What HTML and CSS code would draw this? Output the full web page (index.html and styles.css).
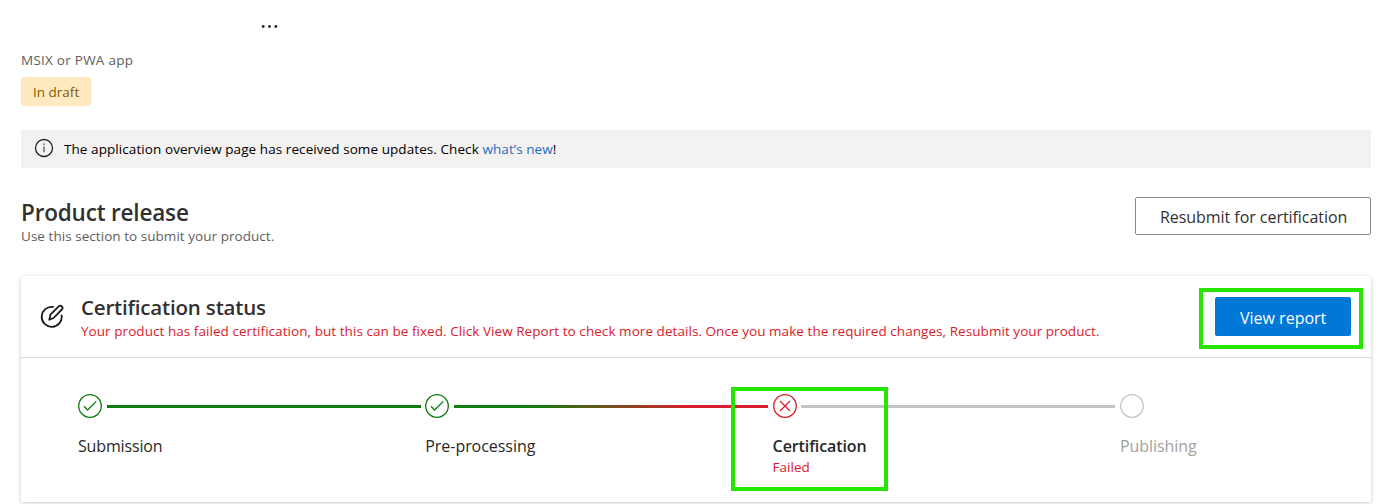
FILE: index.html
```html
<!DOCTYPE html>
<html lang="en">
<head>
<meta charset="utf-8">
<title>Product release</title>
<link rel="stylesheet" href="styles.css">
</head>
<body>
<main class="page">
  <header class="product">
    <svg class="more" viewBox="0 0 18 4"><circle cx="2.2" cy="2.5" r="1.4"/><circle cx="8.5" cy="2.5" r="1.4"/><circle cx="14.8" cy="2.5" r="1.4"/></svg>
    <div class="product-type">MSIX or PWA app</div>
    <div class="tag">In draft</div>
  </header>
  <div class="banner">
    <svg class="info" viewBox="0 0 20 20"><circle cx="10" cy="10" r="8.5" fill="none" stroke="#222" stroke-width="1.3"/><path d="M10 8.4v5.8" stroke="#555" stroke-width="1.3"/><circle cx="10" cy="6.1" r=".85" fill="#555"/></svg>
    <p class="banner-text">The application overview page has received some updates. Check <a class="link">what’s new</a>!</p>
  </div>
  <section class="release">
    <div>
      <h1 class="title">Product release</h1>
      <p class="subtitle">Use this section to submit your product.</p>
    </div>
    <button class="btn btn-outline">Resubmit for certification</button>
  </section>
  <section class="card">
    <div class="card-head">
      <svg class="edit" viewBox="0 0 24 24"><path d="M13.1 2.9A10 10 0 1 0 21.6 11.3M9.3 15.7l1.1-5 8.3-8.3a2.15 2.15 0 0 1 3.1 3.1l-8.2 8.5z" fill="none" stroke="#1b1b1b" stroke-width="1.8" stroke-linecap="round" stroke-linejoin="round"/></svg>
      <div class="status">
        <h2 class="status-title">Certification status</h2>
        <p class="status-text">Your product has failed certification, but this can be fixed. Click View Report to check more details. Once you make the required changes, Resubmit your product.</p>
      </div>
      <div class="report"><button class="btn btn-primary">View report</button></div>
    </div>
    <ol class="steps">
      <li class="step">
        <div class="track"><svg class="dot" viewBox="0 0 24 24"><circle cx="12" cy="12" r="11.3"/><path d="M6 12.3l3.6 3.7 8.7-8.6"/></svg><i class="line"></i></div>
        <div class="label submission">Submission</div>
      </li>
      <li class="step">
        <div class="track"><svg class="dot" viewBox="0 0 24 24"><circle cx="12" cy="12" r="11.3"/><path d="M6 12.3l3.6 3.7 8.7-8.6"/></svg><i class="line line-mixed"></i></div>
        <div class="label">Pre-processing</div>
      </li>
      <li class="step">
        <div class="track"><svg class="dot dot-failed" viewBox="0 0 24 24"><circle cx="12" cy="12" r="11.3"/><path d="M7 7l10 10M17 7L7 17"/></svg><i class="line line-idle"></i></div>
        <div class="label current">Certification</div>
        <div class="failed">Failed</div>
        <div class="callout"></div>
      </li>
      <li class="step step-last">
        <div class="track"><svg class="dot dot-idle" viewBox="0 0 24 24"><circle cx="12" cy="12" r="11.3"/></svg></div>
        <div class="label idle">Publishing</div>
      </li>
    </ol>
  </section>
</main>
</body>
</html>
```
FILE: styles.css
```css
* { box-sizing: border-box; }
body {
  margin: 0;
  background: #fff;
  color: #292827;
  font: 14px/20px "Open Sans", "Noto Sans", sans-serif;
}
h1, h2, p, ol { margin: 0; padding: 0; }
.page { height: 504px; padding: 24px 12px 0 21px; overflow: hidden; white-space: nowrap; }
.product { display: flex; flex-direction: column; align-items: flex-start; }
.more { width: 18px; height: 4px; margin-left: 240px; fill: #222; }
.product-type { margin-top: 22px; color: #605e5c; font-size: 13.5px; letter-spacing: .25px; }
.tag {
  width: 70px; height: 29px; margin-top: 7px; padding-left: 12px;
  border-radius: 2px; background: #ffe9c0; color: #835c00;
  font-size: 13.5px; line-height: 30px;
}
.banner {
  display: flex; align-items: center; gap: 10px;
  height: 38px; margin-top: 24px; padding-left: 13px; background: #f3f2f1;
}
.info { width: 20px; height: 20px; margin-top: -2px; }
.banner-text { color: #000; font-size: 13.5px; letter-spacing: .075px; padding-bottom: 1px; }
.link { color: #1f6cbe; }
.release { display: flex; justify-content: space-between; margin-top: 29px; height: 79px; }
.title { padding-top: 1px; font-size: 22.5px; line-height: 29px; font-weight: 600; color: #323130; letter-spacing: -.18px; }
.subtitle { color: #605e5c; font-size: 13.5px; line-height: 19px; letter-spacing: .045px; }
.btn { font: 16px/20px "Open Sans", "Noto Sans", sans-serif; border-radius: 2px; text-align: left; }
.btn-outline { width: 236px; height: 38px; padding: 2px 0 0 24px; border: 1px solid #8a8886; background: #fff; color: #323130; letter-spacing: -.05px; }
.card { height: 226px; border-radius: 3px; box-shadow: 0 1px 4px rgba(0,0,0,.22); }
.card-head { display: flex; height: 82px; border-bottom: 1px solid #dddcdb; padding-left: 19px; }
.edit { width: 24px; height: 24px; margin-top: 28px; }
.status { flex: 1; padding: 18px 0 0 17px; }
.status-title { padding-bottom: 2px; font-size: 20.5px; line-height: 26px; font-weight: 600; color: #323130; letter-spacing: -.18px; }
.status-text { color: #d9202c; font-size: 13.5px; line-height: 19px; letter-spacing: .056px; }
.report { width: 164px; height: 61px; margin: 12px 8px 0 0; padding: 5px 0 0 12px; border: 4px solid #26e600; }
.btn-primary { width: 136px; height: 39px; padding: 2px 0 0 25px; border: 0; background: #0078d7; color: #fff; }
.steps { display: flex; list-style: none; padding: 36px 0 0 57px; }
.step { position: relative; width: 347.3px; }
.step-last { width: 120px; }
.track { display: flex; align-items: center; gap: 5px; height: 24px; }
.dot { width: 24px; height: 24px; fill: none; stroke: #107c10; stroke-width: 1.3; }
.dot-failed { stroke: #d9202c; }
.dot-idle { stroke: #c4c4c4; }
.line { width: 314px; height: 3px; margin-top: 1px; background: #107c10; }
.line-mixed { background: linear-gradient(90deg, #107c10 25%, #d9202c 75%); }
.line-idle { margin-left: -1px; background: #c4c4c4; }
.label { margin-top: 18px; font-size: 16px; line-height: 20px; letter-spacing: -.05px; }
.submission { letter-spacing: -.15px; }
.current { font-weight: 600; letter-spacing: -.1px; }
.idle { color: #a19f9d; }
.failed { color: #d9202c; font-size: 13.5px; margin-top: 1px; }
.callout { position: absolute; left: -42px; top: -7px; width: 157px; height: 104px; border: 4px solid #26e600; }
```
